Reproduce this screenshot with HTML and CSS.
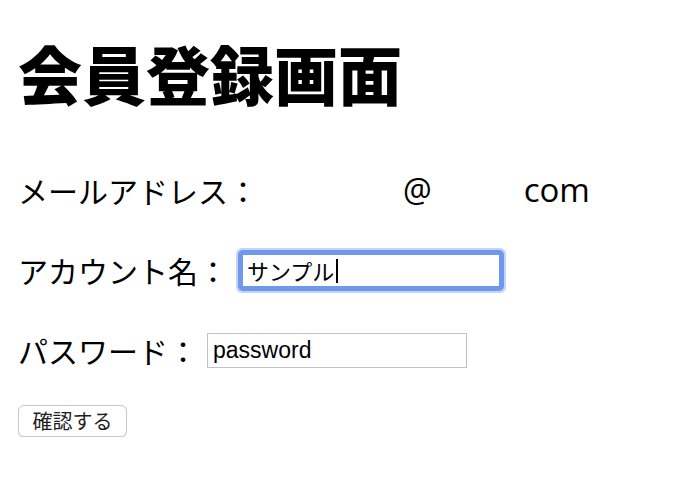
FILE: index.html
```html
<!DOCTYPE html>
<html lang="ja">
<head>
<meta charset="utf-8">
<title>会員登録画面</title>
<link rel="stylesheet" href="styles.css">
</head>
<body>
<h1 class="title">会員登録画面</h1>
<form class="form">
  <div class="row">
    <span class="label">メールアドレス：</span>
    <span class="latin at">@</span>
    <span class="latin dom">com</span>
  </div>
  <div class="row">
    <span class="label">アカウント名：</span>
    <span class="field field-account">
      <input class="input input-focus" type="text" value="サンプル">
      <span class="caret"></span>
    </span>
  </div>
  <div class="row">
    <span class="label">パスワード：</span>
    <span class="field field-password">
      <input class="input" type="text" value="password">
    </span>
  </div>
  <div class="actions">
    <button class="button" type="button">確認する</button>
  </div>
</form>
</body>
</html>
```

FILE: styles.css
```css
html, body {
  margin: 0;
  padding: 0;
  background: #ffffff;
}
body {
  font-family: "Noto Sans CJK JP", "Liberation Sans", sans-serif;
  color: #000000;
  padding: 40px 0 0 18px;
}
.title {
  margin: 0;
  font-size: 64px;
  line-height: 64px;
  font-weight: 900;
  letter-spacing: 0;
}
.form {
  display: flex;
  flex-direction: column;
  margin-top: 66px;
}
.row {
  display: flex;
  align-items: center;
  height: 40px;
  margin-bottom: 40px;
  font-size: 30px;
}
.label {
  line-height: 40px;
  white-space: nowrap;
}
.latin {
  font-family: "Open Sans", "Liberation Sans", sans-serif;
  font-size: 32px;
  line-height: 40px;
}
.at {
  margin-left: 145px;
}
.dom {
  margin-left: 92px;
  font-size: 33px;
}
.field {
  position: relative;
  display: flex;
}
.field-account {
  margin-left: 13px;
}
.field-password {
  margin-left: 9px;
}
.input {
  box-sizing: border-box;
  width: 260px;
  height: 35px;
  margin: 0;
  padding: 0 5px;
  border: 1px solid #c2c2c2;
  border-radius: 0;
  background: #ffffff;
  font-family: "Liberation Sans", "Noto Sans CJK JP", sans-serif;
  font-size: 23px;
  color: #000000;
  outline: none;
}
.input-focus {
  border: 2px solid #6f97ee;
  padding: 0 4px;
  border-radius: 2px;
  box-shadow: 0 0 0 3px #7097ee, 0 0 0 5px #c3d4f8;
  caret-color: transparent;
  font-size: 22px;
}
.caret {
  position: absolute;
  left: 95px;
  top: 6px;
  width: 2px;
  height: 24px;
  background: #000000;
}
.actions {
  display: flex;
  margin-top: -5px;
}
.button {
  box-sizing: border-box;
  width: 109px;
  height: 32px;
  padding: 0;
  border: 1px solid #c9c9c9;
  border-radius: 6px;
  background: #ffffff;
  box-shadow: 0 1px 1px rgba(0, 0, 0, 0.12);
  font-family: "Noto Sans CJK JP", sans-serif;
  font-size: 20px;
  line-height: 30px;
  color: #1e1e1e;
}
```
